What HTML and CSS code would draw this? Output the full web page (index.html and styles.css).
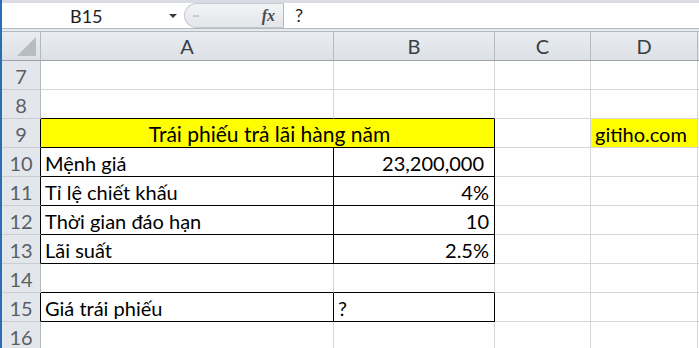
FILE: index.html
```html
<!DOCTYPE html>
<html lang="vi">
<head>
    <meta charset="UTF-8">
    <title>Giá trái phiếu</title>
    <link rel="stylesheet" href="styles.css">
</head>
<body>
    <div class="app">
        <div class="formula-bar">
            <div class="name-box">
                <span class="name">B15</span>
                <span class="arrow"></span>
            </div>
            <div class="fx-box">
                <span class="grip"></span>
                <span class="fx">fx</span>
            </div>
            <div class="formula">?</div>
        </div>

        <table class="sheet">
            <colgroup>
                <col class="c-head">
                <col class="c-a">
                <col class="c-b">
                <col class="c-c">
                <col class="c-d">
                <col class="c-e">
            </colgroup>
            <tr class="col-heads">
                <th class="corner"><span class="tri"></span></th>
                <th>A</th>
                <th>B</th>
                <th>C</th>
                <th>D</th>
                <th></th>
            </tr>
            <tr>
                <th>7</th><td></td><td></td><td></td><td></td><td></td>
            </tr>
            <tr>
                <th>8</th><td class="bb"></td><td class="bb"></td><td></td><td></td><td></td>
            </tr>
            <tr>
                <th class="edge">9</th>
                <td colspan="2" class="title bb br">Trái phiếu trả lãi hàng năm</td>
                <td></td>
                <td class="mark">gitiho.com</td>
                <td></td>
            </tr>
            <tr>
                <th class="edge">10</th><td class="bb br">Mệnh giá</td><td class="num money bb br">23,200,000</td><td></td><td></td><td></td>
            </tr>
            <tr>
                <th class="edge">11</th><td class="bb br">Tỉ lệ chiết khấu</td><td class="num bb br">4%</td><td></td><td></td><td></td>
            </tr>
            <tr>
                <th class="edge">12</th><td class="bb br">Thời gian đáo hạn</td><td class="num bb br">10</td><td></td><td></td><td></td>
            </tr>
            <tr>
                <th class="edge">13</th><td class="bb br">Lãi suất</td><td class="num bb br">2.5%</td><td></td><td></td><td></td>
            </tr>
            <tr>
                <th>14</th><td class="bb"></td><td class="bb"></td><td></td><td></td><td></td>
            </tr>
            <tr>
                <th class="edge">15</th><td class="bb br">Giá trái phiếu</td><td class="bb br">?</td><td></td><td></td><td></td>
            </tr>
            <tr>
                <th>16</th><td></td><td></td><td></td><td></td><td></td>
            </tr>
        </table>
    </div>
</body>
</html>
```

FILE: styles.css
```css
body {
    margin: 0;
    background: #ffffff;
    font-family: Lato, "Open Sans", sans-serif;
    overflow: hidden;
}
.app {
    width: 697px;
    height: 348px;
    border-left: 2px solid #2c6db8;
    overflow: hidden;
}
.formula-bar {
    display: flex;
    height: 25px;
    border-top: 3px solid #d9dde3;
    border-bottom: 1px solid #b3b9c1;
    box-shadow: 0 2px 0 #e8ebef;
    margin-bottom: 2px;
    background: #ffffff;
}
.name-box {
    width: 182px;
    display: flex;
    align-items: center;
}
.name {
    margin-left: 68px;
    font-size: 18px;
    color: #1e1e1e;
}
.arrow {
    margin-left: 66px;
    width: 0;
    height: 0;
    border-left: 4px solid transparent;
    border-right: 4px solid transparent;
    border-top: 4px solid #3a3a3a;
}
.fx-box {
    width: 100px;
    display: flex;
    align-items: center;
    justify-content: space-between;
    background: linear-gradient(180deg, #f3f4f6, #e2e5e9);
    border: 1px solid #c4c9cf;
    border-right: 1px solid #b3b9c1;
    border-radius: 13px 0 0 13px;
    box-sizing: border-box;
}
.grip {
    width: 6px;
    height: 2px;
    margin-left: 8px;
    background: #c4c9cf;
}
.fx {
    font-family: "Liberation Serif", serif;
    font-style: italic;
    font-weight: bold;
    font-size: 16px;
    color: #4a4a4a;
    margin-right: 8px;
}
.formula {
    flex: 1;
    padding-left: 11px;
    font-size: 18px;
    line-height: 25px;
    color: #1e1e1e;
}
.sheet {
    table-layout: fixed;
    border-collapse: separate;
    border-spacing: 0;
    width: 737px;
    font-size: 20px;
}
.c-head { width: 39px; }
.c-a { width: 293px; }
.c-b { width: 161px; }
.c-c { width: 96px; }
.c-d { width: 107px; }
.c-e { width: 41px; }
.sheet td, .sheet th {
    padding: 2px 0 0;
    box-sizing: border-box;
    height: 29px;
    line-height: 26px;
    font-weight: normal;
    white-space: nowrap;
    overflow: hidden;
}
.sheet td {
    border-right: 1px solid #d6d6d6;
    border-bottom: 1px solid #d6d6d6;
    padding-left: 4px;
    color: #000000;
}
.sheet th {
    background: #e3e7ec;
    color: #5a5f66;
    border-right: 1px solid #b3b9c1;
    border-bottom: 1px solid #c8cdd3;
    text-align: center;
}
.col-heads th {
    height: 30px;
    line-height: 28px;
    padding-top: 0;
    border-top: 1px solid #b3b9c1;
    border-bottom: 1px solid #9aa1aa;
    background: linear-gradient(180deg, #e9ecf0, #dde1e6);
    color: #3a3e44;
}
.corner {
    position: relative;
}
.tri {
    position: absolute;
    right: 4px;
    bottom: 4px;
    width: 0;
    height: 0;
    border-left: 19px solid transparent;
    border-bottom: 19px solid #b7bcc3;
}
.sheet th.edge {
    border-right-color: #000000;
}
.sheet td.bb {
    border-bottom-color: #000000;
}
.sheet td.br {
    border-right-color: #000000;
}
.sheet td.title {
    background: #ffff00;
    text-align: center;
    font-size: 21px;
}
.sheet td.num {
    text-align: right;
    padding-right: 5px;
}
.sheet td.money {
    padding-right: 10px;
}
.sheet td.mark {
    background: #ffff00;
}
```
